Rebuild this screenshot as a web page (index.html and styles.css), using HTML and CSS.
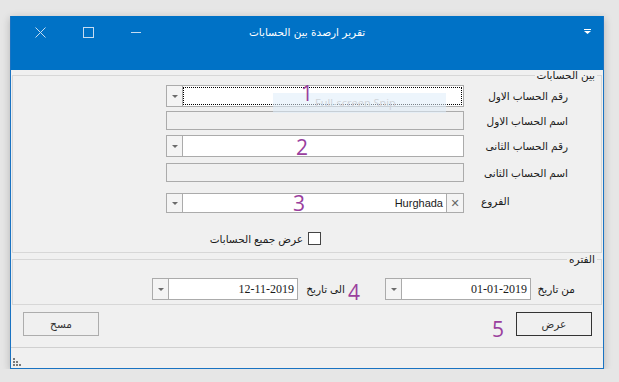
FILE: index.html
```html
<!DOCTYPE html>
<html lang="ar">
<head>
  <meta charset="UTF-8" />
  <title>تقرير ارصدة بين الحسابات</title>
  <link rel="stylesheet" href="styles.css">
</head>
<body>
  <div class="desktop">
    <div class="window" dir="rtl">
      <div class="titlebar">
        <div class="caption">
          <span class="qa-icon">
            <svg width="7" height="5" viewBox="0 0 7 5"><rect x="0" y="0" width="7" height="1" fill="#fff"/><path d="M0 2h7l-3.5 3z" fill="#fff"/></svg>
          </span>
          <span class="title">تقرير ارصدة بين الحسابات</span>
          <div class="controls">
            <span class="ctl"><svg width="10" height="10" viewBox="0 0 10 10"><path d="M0 5.5h10" stroke="#c6dcf1" stroke-width="1"/></svg></span>
            <span class="ctl"><svg width="11" height="11" viewBox="0 0 11 11"><rect x="0.5" y="0.5" width="10" height="10" fill="none" stroke="#c6dcf1"/></svg></span>
            <span class="ctl"><svg width="11" height="11" viewBox="0 0 11 11"><path d="M0.5 0.5l10 10M10.5 0.5l-10 10" stroke="#c6dcf1" stroke-width="1"/></svg></span>
          </div>
        </div>
      </div>

      <div class="client">
        <fieldset class="group accounts">
          <legend>بين الحسابات</legend>
          <div class="row">
            <label>رقم الحساب الاول</label>
            <div class="combo">
              <div class="edit focused"></div>
              <span class="drop"><i class="arrow"></i></span>
            </div>
          </div>
          <div class="row gap4">
            <label>اسم الحساب الاول</label>
            <div class="textbox"></div>
          </div>
          <div class="row gap5">
            <label>رقم الحساب الثانى</label>
            <div class="combo">
              <div class="edit"></div>
              <span class="drop"><i class="arrow"></i></span>
            </div>
          </div>
          <div class="row gap6">
            <label>اسم الحساب الثانى</label>
            <div class="textbox"></div>
          </div>
          <div class="row gap11">
            <label class="short">الفروع</label>
            <div class="combo branch">
              <span class="clear">✕</span>
              <div class="edit"><span class="value">Hurghada</span></div>
              <span class="drop"><i class="arrow"></i></span>
            </div>
          </div>
          <div class="check-row">
            <span class="checkbox"></span>
            <span>عرض جميع الحسابات</span>
          </div>
        </fieldset>

        <fieldset class="group period">
          <legend>الفتره</legend>
          <div class="date-row">
            <label class="from-label">من تاريخ</label>
            <div class="date">
              <div class="edit"><span class="num">01-01-2019</span></div>
              <span class="drop"><i class="arrow"></i></span>
            </div>
            <label class="to-label">الى تاريخ</label>
            <div class="date">
              <div class="edit"><span class="num">12-11-2019</span></div>
              <span class="drop"><i class="arrow"></i></span>
            </div>
          </div>
        </fieldset>

        <div class="actions">
          <button class="btn default">عرض</button>
          <button class="btn">مسح</button>
        </div>

        <div class="statusbar">
          <svg class="grip" width="9" height="9" viewBox="0 0 9 9">
            <rect x="0" y="0" width="2" height="2" fill="#7a7a7a"/>
            <rect x="0" y="3" width="2" height="2" fill="#7a7a7a"/>
            <rect x="3" y="3" width="2" height="2" fill="#7a7a7a"/>
            <rect x="0" y="6" width="2" height="2" fill="#7a7a7a"/>
            <rect x="3" y="6" width="2" height="2" fill="#7a7a7a"/>
            <rect x="6" y="6" width="2" height="2" fill="#7a7a7a"/>
          </svg>
        </div>
      </div>

      <div class="snip" dir="ltr">Full-screen Snip</div>
      <span class="mark m1">1</span>
      <span class="mark m2">2</span>
      <span class="mark m3">3</span>
      <span class="mark m4">4</span>
      <span class="mark m5">5</span>
    </div>
  </div>
</body>
</html>
```

FILE: styles.css
```css
body {
  margin: 0;
  background: #e6e6e6;
  font-family: "Liberation Sans", "DejaVu Sans", sans-serif;
  font-size: 10.5px;
  color: #1a1a1a;
}
.desktop {
  padding: 16px 0 0 10px;
}
.window {
  position: relative;
  width: 592px;
  border: 1px solid #1a73c2;
  border-top: none;
  background: #f0f0f0;
  box-shadow: 0 2px 8px rgba(0, 0, 0, 0.22);
}
label {
  white-space: nowrap;
}

/* title bar */
.titlebar {
  height: 54px;
  background: #0072c6;
  color: #fff;
}
.caption {
  height: 32px;
  display: grid;
  grid-template-columns: 1fr auto 1fr;
  align-items: center;
}
.qa-icon {
  justify-self: start;
  padding-right: 12px;
  display: flex;
  margin-top: -2px;
}
.title {
  font-family: "DejaVu Sans", sans-serif;
  font-size: 10.5px;
}
.controls {
  justify-self: end;
  display: flex;
  padding-left: 5px;
}
.ctl {
  width: 48px;
  height: 32px;
  display: flex;
  align-items: center;
  justify-content: center;
}

/* groups */
.group {
  margin: 0 1px;
  border: 1px solid #d7d7d7;
  min-width: 0;
}
.group legend {
  padding: 0 2px;
  margin-right: 4px;
  line-height: 14px;
}
.accounts {
  margin-top: -2px;
  padding: 3px 0 7px;
}
.period {
  margin-top: -1px;
  padding: 12px 0 4px;
}

.row {
  display: flex;
  align-items: center;
  padding-right: 33px;
}
.row label {
  width: 87px;
  margin-left: 17px;
}
.row label.short {
  text-align: left;
  margin-top: -4px;
}
.gap4 { margin-top: 4px; }
.gap5 { margin-top: 5px; }
.gap6 { margin-top: 6px; }
.gap11 { margin-top: 11px; }

.combo,
.date {
  box-sizing: border-box;
  height: 22px;
  border: 1px solid #ababab;
  background: #fff;
  display: flex;
}
.combo {
  width: 298px;
}
.combo.branch {
  height: 20px;
}
.edit {
  position: relative;
  flex: 1;
  display: flex;
  align-items: center;
  padding-right: 3px;
}
.edit.focused::after {
  content: "";
  position: absolute;
  inset: 1px 1px 1px 0;
  border: 1px dotted #000;
}
.value {
  font-size: 11px;
}
.drop {
  width: 15px;
  border-right: 1px solid #ababab;
  background: #f4f4f4;
  display: flex;
  align-items: center;
  justify-content: center;
}
.arrow {
  width: 0;
  height: 0;
  border-left: 3px solid transparent;
  border-right: 3px solid transparent;
  border-top: 3px solid #6b6b6b;
}
.clear {
  width: 16px;
  border-left: 1px solid #ababab;
  background: #f4f4f4;
  color: #666;
  font-family: "DejaVu Sans", sans-serif;
  font-size: 11px;
  font-weight: bold;
  display: flex;
  align-items: center;
  justify-content: center;
}
.textbox {
  box-sizing: border-box;
  width: 298px;
  height: 19px;
  border: 1px solid #ababab;
  background: #f0f0f0;
}

.check-row {
  display: flex;
  align-items: center;
  gap: 5px;
  margin-top: 19px;
  padding-right: 280px;
  height: 13px;
}
.checkbox {
  box-sizing: border-box;
  width: 13px;
  height: 13px;
  border: 1px solid #444;
  background: #fff;
}

/* period */
.date-row {
  display: flex;
  align-items: center;
  padding-right: 26px;
}
.date {
  width: 146px;
}
.from-label {
  width: 44px;
}
.to-label {
  width: 47px;
  margin-right: 40px;
}
.num {
  font-family: "Liberation Serif", serif;
  font-size: 12px;
}

/* buttons */
.actions {
  height: 42px;
  box-sizing: border-box;
  padding: 7px 11px 0 12px;
  display: flex;
  justify-content: space-between;
  align-items: flex-start;
}
.btn {
  width: 76px;
  height: 24px;
  border: 1px solid #adadad;
  background: #f0f0f0;
  font-family: "Liberation Sans", "DejaVu Sans", sans-serif;
  font-size: 10.5px;
  color: #333;
  padding: 0;
}
.btn.default {
  border-color: #333;
}

.statusbar {
  height: 20px;
  border-top: 1px solid #d0d0d0;
  display: flex;
  align-items: flex-end;
  justify-content: flex-end;
}
.grip {
  margin: 0 0 1px 2px;
}

/* screenshot overlays */
.snip {
  position: absolute;
  left: 262px;
  top: 77px;
  width: 173px;
  height: 20px;
  background: rgba(222, 236, 250, 0.55);
  color: #cfd3d8;
  font-family: "Open Sans", sans-serif;
  font-size: 11px;
  line-height: 20px;
  padding-left: 42px;
  box-sizing: border-box;
}
.mark {
  position: absolute;
  font-family: "Open Sans", sans-serif;
  font-size: 21px;
  line-height: 21px;
  color: #9a3f9e;
}
.m1 { left: 290px; top: 67px; }
.m2 { left: 285px; top: 121px; }
.m3 { left: 282px; top: 177px; }
.m4 { left: 337px; top: 266px; }
.m5 { left: 481px; top: 303px; }
```
